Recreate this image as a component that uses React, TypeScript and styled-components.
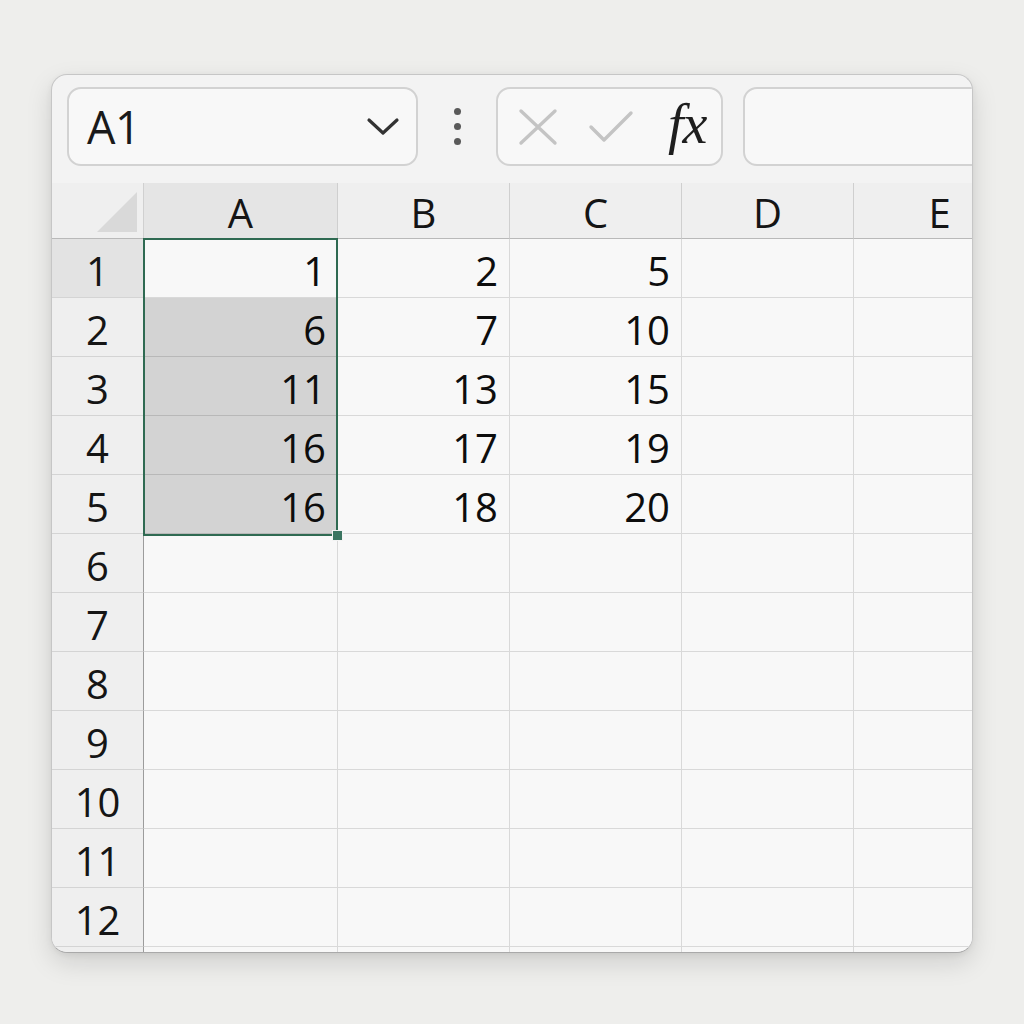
import React from "react";
import styled, { createGlobalStyle } from "styled-components";

const Global = createGlobalStyle`
  html, body { margin: 0; padding: 0; }
  body {
    background: #eeeeec;
    font-family: "Open Sans", "Noto Sans", sans-serif;
    width: 1024px;
    height: 1024px;
    overflow: hidden;
  }
`;

const Page = styled.div`
  padding-top: 74px;
  display: flex;
  justify-content: center;
`;

const Window = styled.div`
  width: 922px;
  height: 879px;
  box-sizing: border-box;
  border: 1px solid #c6c6c6;
  border-bottom-color: #a9a9a9;
  border-radius: 16px;
  background: #f3f3f3;
  overflow: hidden;
  box-shadow: 0 10px 26px rgba(0, 0, 0, 0.13), 0 2px 6px rgba(0, 0, 0, 0.06);
  display: flex;
  flex-direction: column;
`;

const Toolbar = styled.div`
  display: flex;
  align-items: center;
  padding: 12px 0 17px 15px;
  height: 79px;
  flex: none;
`;

const Field = styled.div`
  flex: none;
  height: 79px;
  box-sizing: border-box;
  border: 2px solid #d2d2d2;
  border-radius: 14px;
  background: #f8f8f8;
`;

const NameBox = styled(Field)`
  width: 351px;
  display: flex;
  align-items: center;
  justify-content: space-between;
  padding: 0 16px 0 18px;
  font-size: 45px;
  color: #1a1a1a;
  letter-spacing: -0.5px;
`;

const Dots = styled.div`
  flex: none;
  width: 78px;
  display: flex;
  flex-direction: column;
  align-items: center;
  gap: 8px;
`;

const Dot = styled.span`
  width: 7px;
  height: 7px;
  border-radius: 50%;
  background: #5a5a5a;
`;

const FxBox = styled(Field)`
  width: 227px;
  display: flex;
  align-items: center;
  padding: 0 0 0 20px;
  gap: 30px;
`;

const Fx = styled.span`
  font-family: "Liberation Serif", "DejaVu Serif", serif;
  font-style: italic;
  font-size: 56px;
  color: #1e1e1e;
  margin-left: 4px;
  letter-spacing: -1px;
  line-height: 1;
  padding-bottom: 6px;
`;

const FormulaInput = styled(Field)`
  margin-left: 20px;
  width: 400px;
`;

const Sheet = styled.div`
  position: relative;
  display: grid;
  grid-template-columns: 92px 194px repeat(4, 172px);
  grid-template-rows: 56px repeat(13, 59px);
  width: max-content;
`;

const Corner = styled.div`
  box-sizing: border-box;
  border-right: 1px solid #d0d0d0;
  border-bottom: 1px solid #b9b9b9;
  background: #efefef;
  position: relative;
  &::after {
    content: "";
    position: absolute;
    right: 6px;
    bottom: 6px;
    width: 40px;
    height: 40px;
    background: #d9d9d9;
    clip-path: polygon(100% 0, 100% 100%, 0 100%);
  }
`;

const ColHeader = styled.div<{ $active?: boolean }>`
  box-sizing: border-box;
  border-right: 1px solid #cfcfcf;
  border-bottom: 1px solid #b9b9b9;
  background: ${(p) => (p.$active ? "#e5e5e5" : "#efefef")};
  display: flex;
  align-items: center;
  justify-content: center;
  font-size: 40px;
  color: #151515;
  padding-top: 4px;
`;

const RowHeader = styled.div<{ $active?: boolean }>`
  box-sizing: border-box;
  border-right: 1px solid #9c9c9c;
  border-bottom: 1px solid #d4d4d4;
  background: ${(p) => (p.$active ? "#e3e3e3" : "#efefef")};
  display: flex;
  align-items: center;
  justify-content: center;
  font-size: 40px;
  color: #151515;
  padding-top: 4px;
`;

const Cell = styled.div<{ $filled?: boolean }>`
  box-sizing: border-box;
  border-right: 1px solid #d9d9d9;
  border-bottom: 1px solid ${(p) => (p.$filled ? "#b8b8b8" : "#d9d9d9")};
  background: ${(p) => (p.$filled ? "#d3d3d3" : "#f8f8f8")};
  display: flex;
  align-items: center;
  justify-content: flex-end;
  padding: 4px 11px 0 0;
  font-size: 40px;
  color: #0d0d0d;
`;

const Selection = styled.div`
  position: absolute;
  left: 91px;
  top: 55px;
  width: 195px;
  height: 298px;
  box-sizing: border-box;
  border: 2px solid #2f6a52;
  pointer-events: none;
`;

const Handle = styled.div`
  position: absolute;
  right: -7px;
  bottom: -7px;
  width: 9px;
  height: 9px;
  background: #3b7561;
  border: 1px solid #f4f4f4;
`;

const cols = ["A", "B", "C", "D", "E"];
const data: (number | null)[][] = [
  [1, 2, 5, null, null],
  [6, 7, 10, null, null],
  [11, 13, 15, null, null],
  [16, 17, 19, null, null],
  [16, 18, 20, null, null],
];

export default function App() {
  const rows = Array.from({ length: 13 }, (_, i) => i + 1);
  return (
    <>
      <Global />
      <Page>
        <Window>
          <Toolbar>
            <NameBox>
              <span>A1</span>
              <svg width="34" height="22" viewBox="0 0 34 22">
                <path d="M3 4 L17 17 L31 4" fill="none" stroke="#333" strokeWidth="3.2" strokeLinecap="round" strokeLinejoin="round" />
              </svg>
            </NameBox>
            <Dots>
              <Dot />
              <Dot />
              <Dot />
            </Dots>
            <FxBox>
              <svg width="40" height="38" viewBox="0 0 40 38">
                <path d="M3 3 L37 35 M37 3 L3 35" fill="none" stroke="#c4c4c4" strokeWidth="3.4" strokeLinecap="round" />
              </svg>
              <svg width="46" height="34" viewBox="0 0 46 34">
                <path d="M3 17 L16 30 L43 3" fill="none" stroke="#c4c4c4" strokeWidth="3.4" strokeLinecap="round" strokeLinejoin="round" />
              </svg>
              <Fx>fx</Fx>
            </FxBox>
            <FormulaInput />
          </Toolbar>
          <Sheet>
            <Corner />
            {cols.map((c, i) => (
              <ColHeader key={c} $active={i === 0}>
                {c}
              </ColHeader>
            ))}
            {rows.map((r) => (
              <React.Fragment key={r}>
                <RowHeader $active={r === 1}>{r <= 12 ? r : ""}</RowHeader>
                {cols.map((c, ci) => {
                  const v = data[r - 1]?.[ci] ?? null;
                  return (
                    <Cell key={c} $filled={ci === 0 && r >= 2 && r <= 5}>
                      {v ?? ""}
                    </Cell>
                  );
                })}
              </React.Fragment>
            ))}
            <Selection>
              <Handle />
            </Selection>
          </Sheet>
        </Window>
      </Page>
    </>
  );
}
